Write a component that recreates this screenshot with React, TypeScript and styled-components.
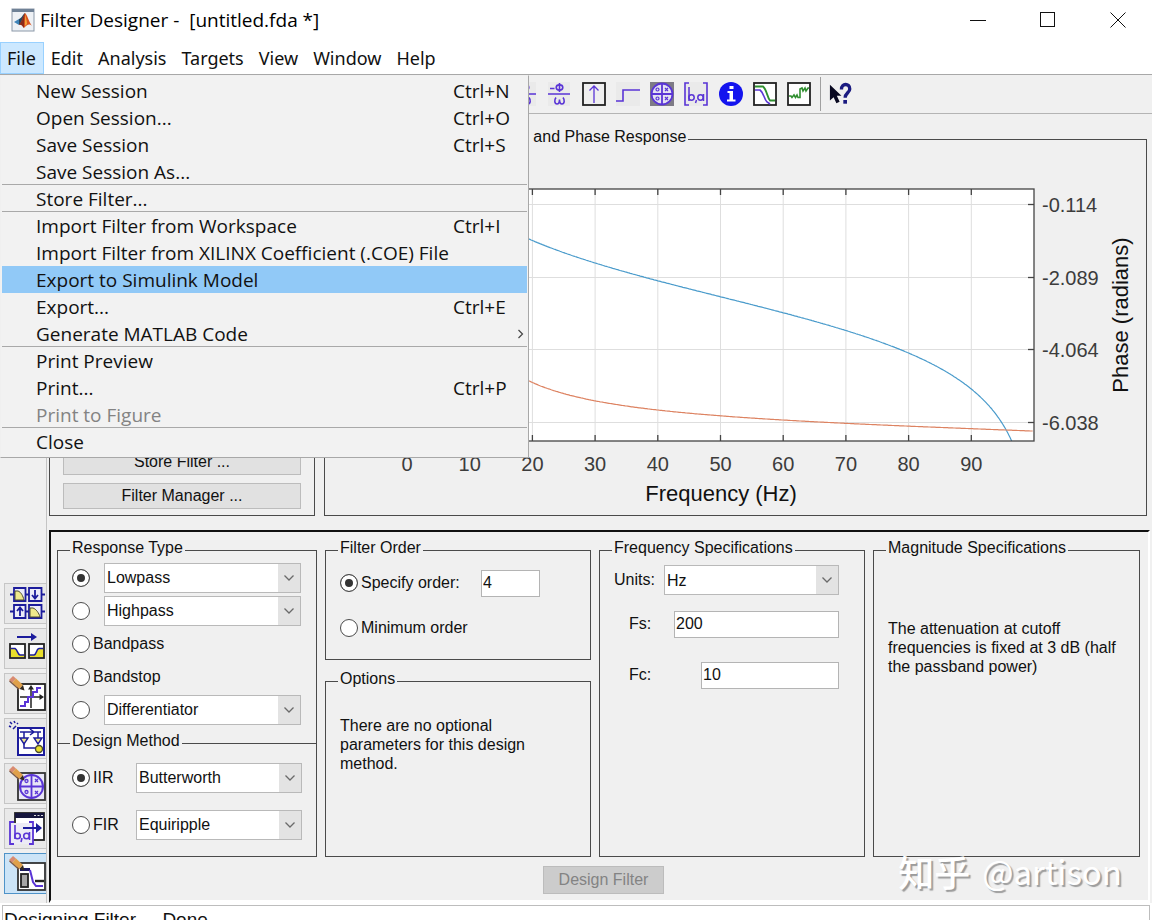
import React, { useState } from 'react';
import styled, { createGlobalStyle } from 'styled-components';

const uiFont = '"Open Sans", "Noto Sans", "Noto Sans CJK SC", sans-serif';
const menuBarFont = '"Noto Sans", "Open Sans", "Noto Sans CJK SC", sans-serif';
const panelFont = '"Liberation Sans", Arial, sans-serif';
const ink = '#111';
const face = '#f0f0f0';
const groupLine = '#4a4a4a';
const blue = '#5a35d6';
const navy = '#1c1c9c';

const GlobalStyle = createGlobalStyle`
  *, *::before, *::after { box-sizing: border-box; }
  body { margin: 0; overflow: hidden; background: #fff; }
  button, input, select { font: inherit; color: inherit; }
`;

const Window = styled.div`
  position: relative;
  display: flex;
  flex-direction: column;
  min-height: 100vh;
  background: #fff;
  color: ${ink};
  font: 16px/18px ${panelFont};
`;

/* ---------- title bar ---------- */
const TitleBar = styled.header`
  display: flex;
  align-items: center;
  height: 42px;
  padding: 0 18px 3px 11px;
  font: 19px/24px ${uiFont};
  color: #000;
`;
const Title = styled.h1`
  flex: 1;
  margin: 0 0 0 5px;
  font: inherit;
  white-space: pre;
`;
const WindowButtons = styled.div`
  display: flex;
  gap: 38px;
`;
const WindowButton = styled.button`
  display: flex;
  align-items: center;
  justify-content: center;
  width: 32px;
  height: 32px;
  padding: 0;
  border: 0;
  background: none;
`;

/* ---------- menu bar ---------- */
const MenuBar = styled.nav`
  position: relative;
  display: flex;
  height: 33px;
  border-bottom: 1px solid #a8a8a8;
  font: 18px/24px ${menuBarFont};
`;
const MenuTitle = styled.button<{ $open?: boolean }>`
  padding: 0 7px 0 6px;
  border: 1px solid ${p => (p.$open ? '#99d1ff' : 'transparent')};
  background: ${p => (p.$open ? '#cce8ff' : 'none')};
`;
const Menu = styled.div`
  position: absolute;
  z-index: 2;
  top: 33px;
  left: 0;
  width: 529px;
  padding: 1px 1px 2px;
  border: 1px solid #a8a8a8;
  border-top-color: ${face};
  border-left-color: ${face};
  background: #f2f2f2;
  font: 19px/24px ${uiFont};
`;
const MenuItem = styled.button<{ $hot?: boolean }>`
  display: grid;
  grid-template-columns: 1fr 64px 10px;
  align-items: center;
  width: 100%;
  height: 27px;
  padding: 0 0 0 34px;
  border: 0;
  background: ${p => (p.$hot ? '#91c9f7' : 'none')};
  text-align: left;
  white-space: nowrap;
  &:disabled { color: #838383; }
`;
const Separator = styled.hr`
  height: 1px;
  margin: -1px 0 0;
  border: 0;
  background: #a9a9a9;
`;

/* ---------- toolbar ---------- */
const ToolBar = styled.div`
  display: flex;
  align-items: center;
  height: 39px;
  padding-left: 513px;
  border-bottom: 1px solid #b4b4b4;
  background: ${face};
`;
const ToolGroup = styled.div`
  display: flex;
  justify-content: space-between;
  width: 298px;
`;
const ToolButton = styled.button`
  display: flex;
  width: 24px;
  height: 24px;
  padding: 0;
  border: 0;
  background: none;
`;
const ToolDivider = styled.div`
  width: 1px;
  height: 34px;
  margin: 0 8px 0 9px;
  background: #a0a0a0;
`;

/* ---------- work area ---------- */
const Work = styled.main`
  display: grid;
  grid-template-columns: 47px 1fr;
  background: ${face};
`;
const SideBar = styled.aside`
  display: flex;
  flex-direction: column;
  justify-content: flex-end;
  gap: 4px;
  padding: 0 0 9px 4px;
  border-right: 1px solid #c4c4c4;
`;
const SideButton = styled.button<{ $active?: boolean }>`
  display: flex;
  height: 41px;
  padding: 1px 0 0 3px;
  border: 1px solid ${p => (p.$active ? '#4f93c8' : '#c6c6c6')};
  border-right: 0;
  background: ${p => (p.$active ? '#cce4f7' : '#e9e9e9')};
  svg { flex: none; }
`;
const Content = styled.div`
  min-width: 0;
  padding-left: 2px;
`;
const TopRow = styled.div`
  display: grid;
  grid-template-columns: 266px 1fr;
  gap: 9px;
  padding: 14px 5px 14px 0;
`;

const Group = styled.fieldset<{ $joined?: boolean }>`
  min-width: 0;
  margin: 0 0 ${p => (p.$joined ? '-11px' : '0')};
  padding: 0 14px;
  border: 1px solid ${groupLine};
  border-bottom-width: ${p => (p.$joined ? '0' : '1px')};
`;
const Legend = styled.legend`
  margin-left: -2px;
  padding: 0 2px 4px;
  line-height: 18px;
`;
const FilterInfo = styled(Group)`
  display: flex;
  flex-direction: column;
  justify-content: flex-end;
  padding: 0 13px 6px;
`;
const InfoButtons = styled.div`
  display: flex;
  flex-direction: column;
  gap: 8px;
`;
const PushButton = styled.button`
  height: 26px;
  padding: 0 15px;
  border: 1px solid #bcbcbc;
  background: #e1e1e1;
  &:disabled { height: 28px; background: #cccccc; color: #838383; }
`;
const PlotGroup = styled(Group)`
  padding: 0 18px;
`;
const Plot = styled.svg`
  display: block;
  width: calc(100% + 36px);
  height: auto;
  margin: 0 -18px;
  font-family: ${panelFont};
`;

/* ---------- design panel ---------- */
const DesignPanel = styled.section`
  margin-right: 2px;
  padding: 7px 8px 6px 6px;
  border: 2px solid #fff;
  border-top-color: #111;
  border-left-color: #111;
  border-bottom-width: 3px;
`;
const Columns = styled.div`
  display: grid;
  grid-template-columns: 260fr 266fr 266fr 267fr;
  gap: 8px;
`;
const Column = styled.div<{ $gap?: number }>`
  display: flex;
  flex-direction: column;
  gap: ${p => p.$gap ?? 0}px;
  > :last-child { flex: 1; }
`;
const Rows = styled.div<{ $bottom: number }>`
  padding-bottom: ${p => p.$bottom}px;
`;
const Row = styled.div<{ $height: number }>`
  display: flex;
  align-items: center;
  height: ${p => p.$height}px;
`;
const FieldRow = styled(Row)<{ $indent?: number }>`
  justify-content: space-between;
  padding: 0 11px 0 ${p => p.$indent ?? 0}px;
`;
const RadioLabel = styled.label<{ $width?: number }>`
  display: flex;
  align-items: center;
  gap: 3px;
  flex: none;
  width: ${p => (p.$width ? `${p.$width}px` : 'auto')};
`;
const Radio = styled.input.attrs({ type: 'radio' })`
  appearance: none;
  width: 18px;
  height: 18px;
  margin: 0;
  border: 1px solid #4c4c4c;
  border-radius: 50%;
  background: #fff;
  &:checked { background: #333; box-shadow: inset 0 0 0 4px #fff; }
`;
const SelectWrap = styled.span<{ $width: number }>`
  position: relative;
  flex: none;
  width: ${p => p.$width}px;
  height: 30px;
  svg { position: absolute; right: 6px; top: 11px; pointer-events: none; }
`;
const NativeSelect = styled.select`
  appearance: none;
  width: 100%;
  height: 100%;
  padding: 1px 24px 0 2px;
  border: 1px solid #b9b9b9;
  border-radius: 0;
  background: linear-gradient(#e3e3e3, #e3e3e3) right / 22px 100% no-repeat #fff;
`;
const TextBox = styled.input.attrs({ type: 'text' })<{ $width: number }>`
  flex: none;
  width: ${p => p.$width}px;
  height: 27px;
  padding: 0 0 0 1px;
  border: 1px solid #b4b4b4;
  border-radius: 0;
  background: #fff;
`;
const Note = styled.p<{ $top: number }>`
  margin: 0;
  padding-top: ${p => p.$top}px;
  line-height: 19px;
`;
const Actions = styled.div`
  display: flex;
  justify-content: center;
  padding: 9px 0 0 10px;
`;
const StatusBar = styled.footer`
  flex: none;
  height: 36px;
  margin: 2px 2px 0;
  padding: 4px 1px;
  border: 1px solid #bdbdbd;
  background: #fff;
  font-size: 19px;
  line-height: 20px;
  white-space: pre;
`;
const Watermark = styled.div`
  position: absolute;
  z-index: 3;
  right: 30px;
  top: 845px;
  display: flex;
  align-items: center;
  gap: 12px;
  font: 33px/52px "Noto Sans CJK SC", sans-serif;
  color: #fff;
  text-shadow: 2px 2px 1px #9c9c9c;
  pointer-events: none;
`;
const WatermarkSite = styled.span`
  font-size: 36px;
  font-weight: 500;
`;

/* ---------- icons ---------- */
const Logo = () => (
  <svg width="24" height="24" viewBox="0 0 24 24">
    <rect x="1" y="1" width="22" height="22" fill="#eef1f5" stroke="#8b98a8" />
    <rect x="1" y="1" width="22" height="3" fill="#6f8196" />
    <path d="M3 14 L8 11 L11 14 L8 17 Z" fill="#3f83b8" />
    <path d="M8 11 C11 10 12 6 14 5 L11 14 L8 17 Z" fill="#27465f" />
    <path d="M14 5 C16 6 18 14 21 18 C18 15 16 17 13 20 C11 17 10 16 8 17 C11 14 12 8 14 5 Z" fill="#d9531e" />
    <path d="M14 5 C13 10 13 15 13 20 C11 17 10 16 8 17 C11 14 12 8 14 5 Z" fill="#8c2a1a" />
    <path d="M14 6 C15 10 16 13 16 16 L14 18 Z" fill="#f4a238" />
  </svg>
);
const Chevron = () => (
  <svg width="12" height="8" viewBox="0 0 12 8" fill="none" stroke="#6a6a6a" strokeWidth="1.3">
    <path d="M1.5 1.5 L6 6 L10.5 1.5" />
  </svg>
);

const svg24 = { width: 24, height: 24, viewBox: '0 0 24 24', fill: 'none', stroke: blue, strokeWidth: 1.6 };

const PhaseDelay = () => (
  <svg {...svg24}>
    <rect x="1" y="0" width="22" height="24" fill="#eaeaea" stroke="none" />
    <path d="M3 6.500 H7.500 M1 12 H23 M12.500 1 V10" />
    <ellipse cx="12.500" cy="5.500" rx="3.300" ry="2.600" />
    <path d="M9 15.500 C7 18 7.500 22 10 22 C12 22 12.500 20 12.500 17.500 C12.500 20 13 22 15 22 C17.500 22 18 18 16 15.500" />
  </svg>
);
const Impulse = () => (
  <svg {...svg24}>
    <rect x="1" y="1" width="22" height="22" fill="#efefef" stroke="#222" strokeWidth="1.800" />
    <path d="M12 21 V4 M7.500 8.500 L12 4 L16.500 8.500" strokeWidth="1.300" />
  </svg>
);
const Step = () => (
  <svg {...svg24}>
    <rect x="0" y="0" width="24" height="24" fill="#eaeaea" stroke="none" />
    <path d="M0 19 H7 V8 H24" />
  </svg>
);
const PoleZero = () => (
  <svg {...svg24}>
    <rect width="24" height="24" fill="#7e7b86" stroke="none" />
    <circle cx="12" cy="12" r="10.500" fill="#e4e2f2" strokeWidth="1.800" />
    <path d="M12 1 V23 M1 12 H23" strokeWidth="1.800" />
    <path d="M15 6 L18 9 M18 6 L15 9 M15 15 L18 18 M18 15 L15 18" strokeWidth="1.200" />
    <circle cx="7.500" cy="7.500" r="1.500" strokeWidth="1.200" />
    <circle cx="7.500" cy="16.500" r="1.500" strokeWidth="1.200" />
  </svg>
);
const Coefficients = () => (
  <svg {...svg24}>
    <rect width="24" height="24" fill="#eaeaea" stroke="none" />
    <path d="M5 1 H1 V23 H5 M19 1 H23 V23 H19" />
    <path d="M5 5 V19 M12.500 18 L11.500 21 M19.500 12 V19" strokeWidth="1.500" />
    <circle cx="7.500" cy="15.500" r="2.700" strokeWidth="1.500" />
    <circle cx="16.500" cy="15.500" r="2.700" strokeWidth="1.500" />
  </svg>
);
const Info = () => (
  <svg {...svg24}>
    <circle cx="12" cy="12" r="12" fill="#1414ee" stroke="none" />
    <rect x="10.500" y="4" width="4" height="3" fill="#fff" stroke="none" />
    <path d="M8.500 9 H14 V17.500 H16.500 V19.500 H8 V17.500 H10.500 V11 H8.500 Z" fill="#fff" stroke="none" />
  </svg>
);
const Specs = () => (
  <svg {...svg24}>
    <rect x="1" y="1" width="22" height="22" fill="#fff" stroke="#222" strokeWidth="1.800" />
    <path d="M2 4.500 H10 C14 8 14 15 17 18.500 H22" stroke="#2f8f2f" strokeWidth="1.800" />
    <path d="M2 8 H7 C11 11 11 17 14 20 L17 22" strokeWidth="1.600" />
  </svg>
);
const Quantize = () => (
  <svg {...svg24}>
    <rect x="1" y="1" width="22" height="22" fill="#fff" stroke="#222" strokeWidth="1.800" />
    <path d="M2 14 H4 L5 15.500 L7 13 L8.500 15.500 L10 13 L11 15.500 H13 V7 L15 6 L16 9 L18 6 L19 9 L21 6 H22" stroke="#2f8f2f" />
  </svg>
);
const HelpPointer = () => (
  <svg width="26" height="24" viewBox="0 0 26 24">
    <path d="M1 2 V19 L5 15.500 L8 22 L11.500 20.500 L8.500 14 H13.500 Z" fill="#080820" />
    <path d="M13.500 7 C13.500 0 22.500 0 22.500 6.500 C22.500 10.500 17.500 11 17.500 16" fill="none" stroke="#1b1b80" strokeWidth="3.600" />
    <rect x="15.500" y="18.500" width="4" height="4" fill="#1b1b80" />
  </svg>
);

const side = { width: 38, height: 36, viewBox: '0 0 38 36', fill: 'none', stroke: blue, strokeWidth: 1.8 };
const Pencil = () => (
  <g stroke="none">
    <path d="M1 5 L5 1 L8 3.500 L4 8 Z" fill="#d98b72" />
    <path d="M4 8 L8 3.500 L15 10 L11.500 14 Z" fill="#e0a04a" />
    <path d="M11.500 14 L15 10 L16.500 15.500 Z" fill="#33291f" />
    <path d="M1.500 6 L11 14.500" stroke="#7b5a48" strokeWidth="1.200" />
  </g>
);
const Multirate = () => (
  <svg {...side} stroke={navy}>
    <path d="M2 9.500 H6 M17 9.500 H21 M34 9.500 H37 M2 26.500 H6 M17 26.500 H21 M34 26.500 H37" />
    <path d="M6 3 H17.500 V16 H6 Z M6 20 H17.500 V33 H6 Z M21 3 H33.500 V16 H21 Z M21 20 H33.500 V33 H21 Z" fill="#ececf8" />
    <path d="M7 6 H10 C13 7 15 11 16 15 H7 Z M22 23 H25 C28 24 31 28 32 32 H22 Z" fill="#efe88c" stroke="#4a4a30" strokeWidth="1" />
    <path d="M27 5 V13 M24 10 L27 13.500 L30 10 M12 31 V23 M9 26 L12 22.500 L15 26" />
  </svg>
);
const Transform = () => (
  <svg {...side} stroke={navy}>
    <path d="M9 7 H27" strokeWidth="2" />
    <path d="M23 3 L29 7 L23 11 Z" fill={navy} stroke="none" />
    <rect x="2" y="14" width="15" height="14" fill="#fff" stroke="#222" />
    <rect x="21" y="14" width="15" height="14" fill="#fff" stroke="#222" />
    <path d="M3 19 H7 C9 20 9 24 12 25 H16 V27 H3 Z M22 25 H26 C29 24 28 20 31 19 H35 V27 H22 Z" fill="#eadf2c" stroke="none" />
    <path d="M3 18.500 H7 C10 20 9 24 12 25 H16 M22 25 H26 C29 24 28 19 31 18.500 H35" strokeWidth="1.500" />
  </svg>
);
const QuantizationParams = () => (
  <svg {...side}>
    <rect x="10" y="9" width="27" height="26" fill="#fff" stroke="#222" />
    <path d="M23 12 V33 M12 22 H34" stroke="#222" strokeWidth="1.500" />
    <path d="M23 10 L20 14.500 H26 Z M36 22 L31.500 19 V25 Z" fill="#222" stroke="none" />
    <path d="M12 31 H17 V27 H20 V22 H25 V17 H29 V13 H33" strokeWidth="2" />
    <Pencil />
  </svg>
);
const Realize = () => (
  <svg {...side} stroke={navy}>
    <rect x="10" y="8" width="26" height="27" fill="#fff" strokeWidth="2" />
    <path d="M12 12 H33 M16 12 V28 H28 M30 12 V24 M22 9 L26 12 L22 15" strokeWidth="1.500" />
    <path d="M12 18 H20 L16 24 Z M26 18 H34 L30 24 Z" fill="#efe88c" strokeWidth="1.400" />
    <circle cx="31" cy="29" r="3.500" fill="#eadf2c" stroke="#4a4a30" strokeWidth="1.400" />
    <path d="M2 2 L4 4 M6 1 L7 3 M1 6 L3 7 M5 9 L8 6 M9 3 L10 4" strokeWidth="1.500" />
  </svg>
);
const PoleZeroEditor = () => (
  <svg {...side}>
    <rect x="10" y="8" width="27" height="27" fill="#e8e6f6" stroke="#333" />
    <circle cx="23.500" cy="21.500" r="11.500" strokeWidth="2" />
    <path d="M23.500 9 V34 M11 21.500 H36" strokeWidth="1.800" />
    <path d="M27 14 L30 17 M30 14 L27 17 M27 26 L30 29 M30 26 L27 29" strokeWidth="1.300" />
    <circle cx="18.500" cy="16" r="1.500" strokeWidth="1.300" />
    <circle cx="18.500" cy="27" r="1.500" strokeWidth="1.300" />
    <Pencil />
  </svg>
);
const ImportFilter = () => (
  <svg {...side}>
    <rect x="7" y="3" width="29" height="27" fill="#fff" stroke="#222" />
    <rect x="7" y="3" width="29" height="5" fill="#15153c" stroke="none" />
    <path d="M26 5.500 H28 M29.500 5.500 H31.500 M33 5.500 H35" stroke="#ddd" strokeWidth="1" />
    <path d="M2 13 V34 H25 V13 Z" fill="#ecebf6" stroke="none" />
    <path d="M6 12 H2 V34 H6 M21 12 H25 V34 H21" />
    <path d="M7 15 V29 M14 28 L13 32 M21.500 22 V30" strokeWidth="1.600" />
    <circle cx="9.500" cy="26" r="2.800" strokeWidth="1.600" />
    <circle cx="18.500" cy="26" r="2.800" strokeWidth="1.600" />
    <path d="M15 18 H30" stroke={navy} strokeWidth="2" />
    <path d="M28 13 L34 18 L28 23 Z" fill={navy} stroke="none" />
  </svg>
);
const DesignFilterIcon = () => (
  <svg {...side}>
    <rect x="10" y="8" width="27" height="27" fill="#fff" stroke="#333" />
    <rect x="13" y="19" width="7" height="13" fill="#a6a6a6" stroke="#222" />
    <path d="M12 14.500 H22" stroke="#1b1b60" strokeWidth="3" />
    <path d="M22 15 L25 27 L28 31 H35" strokeWidth="2" />
    <path d="M27 26 H36" stroke="#222" strokeWidth="2.400" />
    <Pencil />
  </svg>
);

/* ---------- response plot ---------- */
const axes = { left: 82, right: 709, top: 41, bottom: 293 };
const gridY = [56, 129, 201, 274];
const phaseLabels = ['-0.114', '-2.089', '-4.064', '-6.038'];
const freqToX = (f: number) => axes.left + (f * (axes.right - axes.left)) / 100;
const warped = (f: number) => Math.tan((Math.PI * f) / 200) / Math.tan(Math.PI / 20);
const magnitudeY = (f: number) => 56.5 + 1.441 * 10 * Math.log10(1 + Math.pow(warped(f), 8));
const phaseY = (f: number) => {
  const w = warped(f);
  const phase = Math.atan2(0.7654 * w, 1 - w * w) + Math.atan2(1.8478 * w, 1 - w * w);
  return 56.5 + (phase - 0.114) * 36.73;
};
const trace = (fn: (f: number) => number) =>
  Array.from({ length: 499 }, (_, i) => (i + 1) / 5)
    .map(f => `${freqToX(f).toFixed(1)},${fn(f).toFixed(1)}`)
    .join(' ');

const ResponsePlot = () => {
  const ticks = Array.from({ length: 10 }, (_, i) => i * 10);
  const { left, right, top, bottom } = axes;
  return (
    <Plot viewBox="0 2 821 365" role="img" aria-label="Magnitude and phase response">
      <defs>
        <clipPath id="axes-area">
          <rect x={left} y={top} width={right - left} height={bottom - top} />
        </clipPath>
      </defs>
      <rect x={left} y={top} width={right - left} height={bottom - top} fill="#fff" />
      <g stroke="#dedede">
        {ticks.slice(1).map(t => <line key={t} x1={freqToX(t)} x2={freqToX(t)} y1={top} y2={bottom} />)}
        {gridY.map(y => <line key={y} x1={left} x2={right} y1={y + 0.5} y2={y + 0.5} />)}
      </g>
      <g fill="none" strokeWidth="1.200" clipPath="url(#axes-area)">
        <polyline points={trace(magnitudeY)} stroke="#4a9bcb" />
        <polyline points={trace(phaseY)} stroke="#dd8362" />
      </g>
      <g stroke="#444" strokeWidth="1.300" fill="none">
        <rect x={left} y={top} width={right - left} height={bottom - top} />
        {ticks.slice(1).map(t => (
          <path key={t} d={`M${freqToX(t)} ${top} v6 M${freqToX(t)} ${bottom} v-6`} />
        ))}
        {gridY.map(y => <path key={y} d={`M${right} ${y + 0.5} h-6`} />)}
      </g>
      <g fill="#3c3c3c" fontSize="20">
        {ticks.map(t => <text key={t} x={freqToX(t)} y="323" textAnchor="middle">{t}</text>)}
        {gridY.map((y, i) => <text key={y} x="717" y={y + 8}>{phaseLabels[i]}</text>)}
      </g>
      <g fill="#111" fontSize="22" textAnchor="middle">
        <text x="396" y="353">Frequency (Hz)</text>
        <text transform="translate(803 167) rotate(-90)">Phase (radians)</text>
      </g>
    </Plot>
  );
};

/* ---------- data ---------- */
type Entry = { label: string; keys?: string; hot?: boolean; sub?: boolean; off?: boolean };
const fileMenu: Entry[][] = [
  [
    { label: 'New Session', keys: 'Ctrl+N' },
    { label: 'Open Session...', keys: 'Ctrl+O' },
    { label: 'Save Session', keys: 'Ctrl+S' },
    { label: 'Save Session As...' },
  ],
  [{ label: 'Store Filter...' }],
  [
    { label: 'Import Filter from Workspace', keys: 'Ctrl+I' },
    { label: 'Import Filter from XILINX Coefficient (.COE) File' },
    { label: 'Export to Simulink Model', hot: true },
    { label: 'Export...', keys: 'Ctrl+E' },
    { label: 'Generate MATLAB Code', sub: true },
  ],
  [
    { label: 'Print Preview' },
    { label: 'Print...', keys: 'Ctrl+P' },
    { label: 'Print to Figure', off: true },
  ],
  [{ label: 'Close' }],
];
const menus = ['File', 'Edit', 'Analysis', 'Targets', 'View', 'Window', 'Help'];
const tools: [string, React.FC][] = [
  ['Group delay', PhaseDelay],
  ['Phase delay', PhaseDelay],
  ['Impulse response', Impulse],
  ['Step response', Step],
  ['Pole-zero plot', PoleZero],
  ['Filter coefficients', Coefficients],
  ['Filter information', Info],
  ['Magnitude specifications', Specs],
  ['Round-off noise', Quantize],
];
const sideTools: [string, React.FC][] = [
  ['Create a multirate filter', Multirate],
  ['Transform filter', Transform],
  ['Set quantization parameters', QuantizationParams],
  ['Realize model', Realize],
  ['Pole-zero editor', PoleZeroEditor],
  ['Import filter', ImportFilter],
  ['Design filter', DesignFilterIcon],
];

type SelectProps = { label?: string; id?: string; value: string; width: number };
const Select = ({ label, id, value, width }: SelectProps) => (
  <SelectWrap $width={width}>
    <NativeSelect id={id} aria-label={label} defaultValue={value}>
      <option>{value}</option>
    </NativeSelect>
    <Chevron />
  </SelectWrap>
);

export default function App() {
  const [response, setResponse] = useState('Lowpass');
  const [method, setMethod] = useState('IIR');
  const [order, setOrder] = useState('specify');

  const responseRow = (name: string, select: boolean) => (
    <Row $height={33} key={name}>
      <RadioLabel $width={select ? 32 : undefined}>
        <Radio
          name="response"
          aria-label={name}
          checked={response === name}
          onChange={() => setResponse(name)}
        />
        {!select && name}
      </RadioLabel>
      {select && <Select label={`${name} type`} value={name} width={197} />}
    </Row>
  );
  const methodRow = (name: string, value: string) => (
    <Row $height={47} key={name}>
      <RadioLabel $width={64}>
        <Radio name="method" checked={method === name} onChange={() => setMethod(name)} />
        {name}
      </RadioLabel>
      <Select label={`${name} method`} value={value} width={166} />
    </Row>
  );

  return (
    <Window>
      <GlobalStyle />
      <TitleBar>
        <Logo />
        <Title>{'Filter Designer -  [untitled.fda *]'}</Title>
        <WindowButtons>
          <WindowButton aria-label="Minimize">
            <svg width="16" height="16" stroke="#111"><path d="M0 8.500 H16" /></svg>
          </WindowButton>
          <WindowButton aria-label="Maximize">
            <svg width="16" height="16" stroke="#111" fill="none"><rect x="0.500" y="0.500" width="14" height="14" /></svg>
          </WindowButton>
          <WindowButton aria-label="Close">
            <svg width="16" height="16" stroke="#111"><path d="M0.500 0.500 L15.500 15.500 M15.500 0.500 L0.500 15.500" /></svg>
          </WindowButton>
        </WindowButtons>
      </TitleBar>

      <MenuBar>
        {menus.map(m => <MenuTitle key={m} $open={m === 'File'}>{m}</MenuTitle>)}
        <Menu role="menu">
          {fileMenu.map((group, g) => (
            <React.Fragment key={g}>
              {g > 0 && <Separator />}
              {group.map(item => (
                <MenuItem key={item.label} role="menuitem" $hot={item.hot} disabled={item.off}>
                  <span>{item.label}</span>
                  <span>{item.keys}</span>
                  {item.sub && (
                    <svg width="8" height="10" fill="none" stroke="#444" strokeWidth="1.200">
                      <path d="M1.500 1 L5.500 5 L1.500 9" />
                    </svg>
                  )}
                </MenuItem>
              ))}
            </React.Fragment>
          ))}
        </Menu>
      </MenuBar>

      <ToolBar>
        <ToolGroup>
          {tools.map(([name, Icon]) => <ToolButton key={name} aria-label={name}><Icon /></ToolButton>)}
        </ToolGroup>
        <ToolDivider />
        <ToolButton aria-label="What's this?"><HelpPointer /></ToolButton>
      </ToolBar>

      <Work>
        <SideBar>
          {sideTools.map(([name, Icon], i) => (
            <SideButton key={name} aria-label={name} $active={i === sideTools.length - 1}><Icon /></SideButton>
          ))}
        </SideBar>

        <Content>
          <TopRow>
            <FilterInfo>
              <InfoButtons>
                <PushButton>Store Filter ...</PushButton>
                <PushButton>Filter Manager ...</PushButton>
              </InfoButtons>
            </FilterInfo>
            <PlotGroup>
              <Legend>Magnitude Response (dB) and Phase Response</Legend>
              <ResponsePlot />
            </PlotGroup>
          </TopRow>

          <DesignPanel>
            <Columns>
              <Column>
                <Group $joined>
                  <Legend>Response Type</Legend>
                  <Rows $bottom={17}>
                    {responseRow('Lowpass', true)}
                    {responseRow('Highpass', true)}
                    {responseRow('Bandpass', false)}
                    {responseRow('Bandstop', false)}
                    {responseRow('Differentiator', true)}
                  </Rows>
                </Group>
                <Group>
                  <Legend>Design Method</Legend>
                  <Rows $bottom={8}>
                    {methodRow('IIR', 'Butterworth')}
                    {methodRow('FIR', 'Equiripple')}
                  </Rows>
                </Group>
              </Column>

              <Column $gap={10}>
                <Group>
                  <Legend>Filter Order</Legend>
                  <Rows $bottom={8}>
                    <Row $height={44}>
                      <RadioLabel $width={141}>
                        <Radio name="order" checked={order === 'specify'} onChange={() => setOrder('specify')} />
                        Specify order:
                      </RadioLabel>
                      <TextBox $width={59} defaultValue="4" aria-label="Order" />
                    </Row>
                    <Row $height={46}>
                      <RadioLabel>
                        <Radio name="order" checked={order === 'minimum'} onChange={() => setOrder('minimum')} />
                        Minimum order
                      </RadioLabel>
                    </Row>
                  </Rows>
                </Group>
                <Group>
                  <Legend>Options</Legend>
                  <Note $top={24}>There are no optional parameters for this design method.</Note>
                </Group>
              </Column>

              <Group>
                <Legend>Frequency Specifications</Legend>
                <FieldRow $height={38}>
                  <label htmlFor="units">Units:</label>
                  <Select id="units" value="Hz" width={175} />
                </FieldRow>
                <FieldRow $height={50} $indent={15}>
                  <label htmlFor="fs">Fs:</label>
                  <TextBox id="fs" $width={165} defaultValue="200" />
                </FieldRow>
                <FieldRow $height={52} $indent={15}>
                  <label htmlFor="fc">Fc:</label>
                  <TextBox id="fc" $width={138} defaultValue="10" />
                </FieldRow>
              </Group>

              <Group>
                <Legend>Magnitude Specifications</Legend>
                <Note $top={58}>
                  The attenuation at cutoff frequencies is fixed at 3 dB (half the passband power)
                </Note>
              </Group>
            </Columns>
            <Actions>
              <PushButton disabled>Design Filter</PushButton>
            </Actions>
          </DesignPanel>
        </Content>
      </Work>

      <StatusBar>Designing Filter ... Done</StatusBar>
      <Watermark>
        <WatermarkSite>知乎</WatermarkSite>
        <span>@artison</span>
      </Watermark>
    </Window>
  );
}
